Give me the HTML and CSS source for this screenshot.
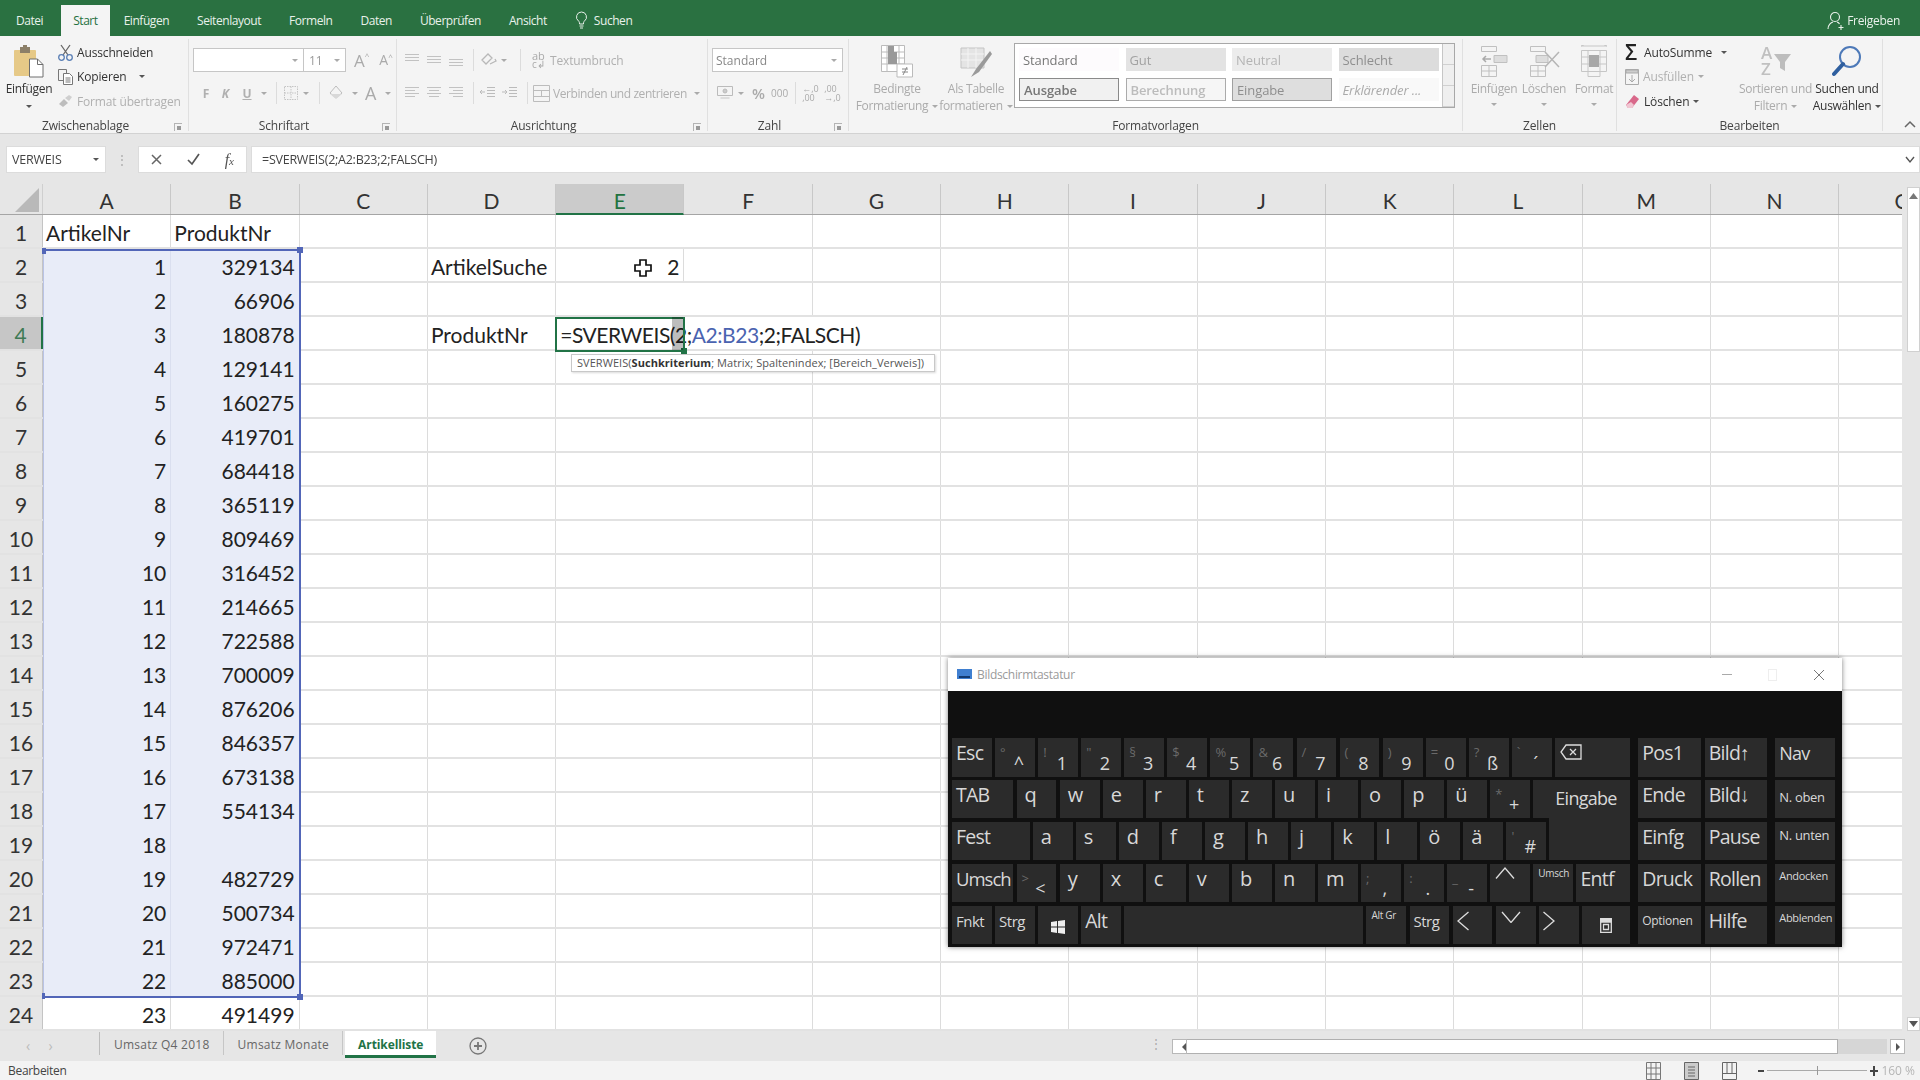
FILE: index.html
```html
<!DOCTYPE html>
<html lang="de">
<head>
<meta charset="utf-8">
<title>Excel</title>
<link rel="stylesheet" href="styles.css">
</head>
<body>
<div class="app">
  <header class="titlebar">
    <nav class="tabs">
      <span class="tab first">Datei</span><span class="tab active">Start</span><span class="tab">Einfügen</span><span class="tab">Seitenlayout</span><span class="tab">Formeln</span><span class="tab">Daten</span><span class="tab">Überprüfen</span><span class="tab">Ansicht</span>
      <span class="search"><svg width="13" height="19" viewBox="0 0 13 19" fill="none" stroke="#e8f0ea" stroke-width="1"><path d="M6.5 1a5 5 0 0 0-3 9c.8.7 1 1.5 1 3h4c0-1.500.2-2.300 1-3a5 5 0 0 0-3-9z"/><path d="M4.500 15h4M5 17h3"/></svg>Suchen</span>
    </nav>
    <span class="share"><svg width="18" height="20" viewBox="0 0 18 20" fill="none" stroke="#e8f0ea" stroke-width="1.100"><circle cx="8" cy="6" r="4.500"/><path d="M1 18c0-4 3-6.500 5-7M10 11c1 .3 2 1 2.500 2M14 14v5M11.500 16.500h5"/></svg>Freigeben</span>
  </header>

  <section class="ribbon">
    <div class="group g-clip">
      <div class="body">
        <div class="big b-paste">
          <svg class="bigicon" width="30" height="33" viewBox="0 0 30 33"><rect x="0" y="5" width="22" height="26" rx="1" fill="#e6c987"/><rect x="6" y="2" width="10" height="6" fill="#8c7f68"/><rect x="9" y="0" width="4" height="4" fill="#8c7f68"/><path d="M15.500 14h8l5.500 5.500V32h-13.500z" fill="#fff" stroke="#6e6e6e"/><path d="M23.500 14v5.500H29" fill="none" stroke="#6e6e6e"/></svg>
          <span class="lbl on">Einfügen</span>
          <i class="caret on"></i>
        </div>
        <div class="stack">
          <div class="sm on"><svg width="15" height="17" viewBox="0 0 15 17" fill="none" stroke-width="1.300"><path d="M3 1l7 10M12 1L5 11" stroke="#666"/><circle cx="3.500" cy="13.500" r="2.800" stroke="#5a7fb5"/><circle cx="11.500" cy="13.500" r="2.800" stroke="#5a7fb5"/></svg><span>Ausschneiden</span></div>
          <div class="sm on"><svg width="15" height="16" viewBox="0 0 15 16" fill="#f4f4f4" stroke="#777"><path d="M.5.500h8v11h-8z"/><path d="M5.500 4.500h6l3 3v8h-9z" fill="#fff"/><path d="M7.500 9h5M7.500 11h5M7.500 13h5"/></svg><span>Kopieren</span><i class="caret on ml"></i></div>
          <div class="sm off"><svg width="15" height="14" viewBox="0 0 15 14"><path d="M1 10l5-5 4 4-5 4z" fill="#bdbdbd"/><path d="M7 4l4-3 3 2-3 4z" fill="#cfcfcf"/></svg><span>Format übertragen</span></div>
        </div>
      </div>
      <div class="glabel">Zwischenablage<i class="launch"></i></div>
    </div>

    <div class="group g-font">
      <div class="body col">
        <div class="rw">
          <div class="combo c-name"><i class="caret"></i></div>
          <div class="combo c-size"><span>11</span><i class="caret"></i></div>
          <span class="aup">A<sup>^</sup></span><span class="adn">A<sup>^</sup></span>
        </div>
        <div class="rw r2 fmt">
          <b class="w18">F</b><b class="w21 it">K</b><b class="w22 un">U</b><i class="caret w12"></i><i class="sep"></i>
          <svg class="w16" width="16" height="16" viewBox="0 0 16 16" fill="none" stroke="#c4c4c4"><path d="M1.500 1.500h13v13h-13zM8 1.500v13M1.500 8h13" stroke-dasharray="1.500 1"/></svg>
          <i class="caret w14"></i><i class="sep"></i>
          <svg class="w22" width="20" height="18" viewBox="0 0 20 18"><path d="M3 9l6-7 6 7-6 5z" fill="none" stroke="#bdbdbd"/><path d="M3 10l12 0-6 5z" fill="#d8d8d8"/></svg>
          <i class="caret w14"></i>
          <span class="bigA">A</span><i class="caret w14"></i>
        </div>
      </div>
      <div class="glabel">Schriftart<i class="launch"></i></div>
    </div>

    <div class="group g-align">
      <div class="body col">
        <div class="rw">
          <svg class="ali" width="16" height="14" viewBox="0 0 16 14" stroke="#c2c2c2"><path d="M1 1.500h14M1 4.500h14M1 7.500h14"/></svg>
          <svg class="ali" width="16" height="14" viewBox="0 0 16 14" stroke="#c2c2c2"><path d="M1 3.500h14M1 6.500h14M1 9.500h14"/></svg>
          <svg class="ali" width="16" height="14" viewBox="0 0 16 14" stroke="#c2c2c2"><path d="M1 6.500h14M1 9.500h14M1 12.500h14"/></svg>
          <i class="sep sep-a"></i>
          <svg class="ori" width="18" height="18" viewBox="0 0 18 18" fill="none" stroke="#b8b8b8" stroke-width="1.300"><path d="M2 9l6-6 4 4-6 6zM10 13l6-3M15 8l1 2-2 1"/></svg>
          <i class="caret w10"></i><i class="sep sep-b"></i>
          <span class="wrapab">ab<small>c↲</small></span>
          <span class="offtxt">Textumbruch</span>
        </div>
        <div class="rw r2">
          <svg class="ali" width="16" height="14" viewBox="0 0 16 14" stroke="#c2c2c2"><path d="M1 1.500h14M1 4.500h10M1 7.500h14M1 10.500h10"/></svg>
          <svg class="ali" width="16" height="14" viewBox="0 0 16 14" stroke="#c2c2c2"><path d="M1 1.500h14M3 4.500h10M1 7.500h14M3 10.500h10"/></svg>
          <svg class="ali" width="16" height="14" viewBox="0 0 16 14" stroke="#c2c2c2"><path d="M1 1.500h14M5 4.500h10M1 7.500h14M5 10.500h10"/></svg>
          <i class="sep sep-a"></i>
          <svg class="ind" width="16" height="14" viewBox="0 0 16 14" fill="none" stroke="#bbb"><path d="M7 1.500h8M7 4.500h8M7 7.500h8M7 10.500h8M5 6H0M2 4L0 6l2 2" /></svg>
          <svg class="ind" width="16" height="14" viewBox="0 0 16 14" fill="none" stroke="#bbb"><path d="M7 1.500h8M7 4.500h8M7 7.500h8M7 10.500h8M0 6h5M3 4l2 2-2 2"/></svg>
          <i class="sep sep-c"></i>
          <svg class="merge" width="17" height="17" viewBox="0 0 17 17" fill="none" stroke="#bcbcbc"><path d="M.5.500h16v16H.5zM.5 5.500h16M.5 11.500h16M8.500 5.500v6"/></svg>
          <span class="offtxt nar">Verbinden und zentrieren</span><i class="caret mlc"></i>
        </div>
      </div>
      <div class="glabel">Ausrichtung<i class="launch"></i></div>
    </div>

    <div class="group g-num">
      <div class="body col">
        <div class="rw"><div class="combo c-std"><span>Standard</span><i class="caret"></i></div></div>
        <div class="rw r2 nums">
          <svg class="w18" width="17" height="16" viewBox="0 0 17 16" fill="none" stroke="#bbb"><path d="M1 1.500h15v9H1z"/><circle cx="8.500" cy="6" r="2" fill="#ccc"/><path d="M4 13h9" stroke="#ddd" stroke-width="2"/></svg>
          <i class="caret w14"></i>
          <span class="pct">%</span><span class="tho">000</span><i class="sep sep-n"></i>
          <span class="dec">←,0<br>,00</span><span class="dec">,00<br>→,0</span>
        </div>
      </div>
      <div class="glabel">Zahl<i class="launch"></i></div>
    </div>

    <div class="group g-style">
      <div class="body gal-body">
        <div class="big b-cond">
          <svg class="bigicon" width="32" height="33" viewBox="0 0 32 33" fill="#fff" stroke="#bbb"><path d="M.5.500h23v26H.5z"/><path d="M6 1v26M18 1v26M1 7h22M1 13h22M1 19h22" fill="none"/><path d="M7 1h6v6h3v12H7z" fill="#999" stroke="none"/><path d="M16 19h15.500v13H16z"/><path d="M21 24h6M21 27h6M26 22l-4 8" fill="none" stroke="#888"/></svg>
          <span class="lbl">Bedingte</span><span class="lbl">Formatierung<i class="caret in"></i></span>
        </div>
        <div class="big b-tab">
          <svg class="bigicon" width="32" height="33" viewBox="0 0 32 33"><path d="M1 3h23v20H1z" fill="#e4e4e4" stroke="#c4c4c4"/><path d="M8 3v20M16 3v20M1 9h23M1 15h23" stroke="#f4f4f4"/><path d="M30 6L16 24l-5 8 8-5L32 9z" fill="#9a9a9a"/></svg>
          <span class="lbl">Als Tabelle</span><span class="lbl">formatieren<i class="caret in"></i></span>
        </div>
        <div class="gallery">
          <div class="sgrid">
            <span class="st s-std">Standard</span><span class="st s-gut">Gut</span><span class="st s-neu">Neutral</span><span class="st s-sch">Schlecht</span>
            <span class="st s-aus">Ausgabe</span><span class="st s-ber">Berechnung</span><span class="st s-ein">Eingabe</span><span class="st s-erk">Erklärender ...</span>
          </div>
          <div class="gscroll"><i></i><i></i><i></i></div>
        </div>
      </div>
      <div class="glabel nolaunch">Formatvorlagen</div>
    </div>

    <div class="group g-cell">
      <div class="body">
        <div class="big b-c"><svg class="bigicon" width="28" height="33" viewBox="0 0 28 33" fill="none" stroke="#c0c0c0"><path d="M1.500 1.500h15v5h-15zM1.500 20.500h15v11h-15zM9 20.500v11M1.500 26h15"/><path d="M14 10.500h13v7H14z" fill="#ddd"/><path d="M3 14h8M6 11l-3 3 3 3" stroke="#aaa" stroke-width="1.500"/></svg><span class="lbl">Einfügen</span><i class="caret"></i></div>
        <div class="big b-c"><svg class="bigicon" width="32" height="33" viewBox="0 0 32 33" fill="none" stroke="#c0c0c0"><path d="M2.500 1.500h15v5h-15zM2.500 20.500h15v11h-15zM10 20.500v11M2.500 26h15"/><path d="M8 10.500h12v7H8z" fill="#ddd"/><path d="M17 7l14 15M31 7L17 22" stroke="#b5b5b5" stroke-width="1.500"/></svg><span class="lbl">Löschen</span><i class="caret"></i></div>
        <div class="big b-c"><svg class="bigicon" width="28" height="33" viewBox="0 0 28 33" fill="none" stroke="#c6c6c6"><path d="M1 1h26M1 1l3-1M27 1l-3-1M1.500 5.500h25v21h-25zM8 5.500v21M20 5.500v21M1.500 12h25M1.500 19h25M8 26.500h12v5H8z"/><path d="M9 10h10v12H9z" fill="#a8a8a8" stroke="none"/></svg><span class="lbl">Format</span><i class="caret"></i></div>
      </div>
      <div class="glabel nolaunch">Zellen</div>
    </div>

    <div class="group g-edit">
      <div class="body">
        <div class="stack st-e">
          <div class="sm on"><span class="sigma">Σ</span><span>AutoSumme</span><i class="caret on ml2"></i></div>
          <div class="sm off"><svg width="14" height="16" viewBox="0 0 14 16" fill="none" stroke="#aaa"><path d="M.5.500h13v15H.5z"/><path d="M1 1h12v3H1z" fill="#ccc"/><path d="M7 6v7M4 10l3 3 3-3"/></svg><span>Ausfüllen</span><i class="caret in"></i></div>
          <div class="sm on"><svg width="15" height="15" viewBox="0 0 15 15"><path d="M9 1l5 4-7 9H3L1 11z" fill="#d9688a"/><path d="M1 11l2 3h4l2-3-3-3z" fill="#f0c6d2"/></svg><span>Löschen</span><i class="caret on in"></i></div>
        </div>
        <div class="big b-sort"><svg class="bigicon" width="32" height="33" viewBox="0 0 32 33"><text x="1" y="14" class="azt">A</text><text x="1" y="30" class="azt">Z</text><path d="M14 9h17l-6 8v9l-5-3v-6z" fill="#bdbdbd"/></svg><span class="lbl">Sortieren und</span><span class="lbl">Filtern<i class="caret in"></i></span></div>
        <div class="big b-find"><svg class="bigicon" width="30" height="33" viewBox="0 0 30 33" fill="none"><circle cx="18" cy="12" r="10" stroke="#4d79b8" stroke-width="2"/><path d="M11 19L2 29" stroke="#2f5f9f" stroke-width="4" stroke-linecap="round"/></svg><span class="lbl on">Suchen und</span><span class="lbl on">Auswählen<i class="caret on in"></i></span></div>
      </div>
      <div class="glabel nolaunch">Bearbeiten</div>
    </div>
    <div class="collapse"><svg width="12" height="8" viewBox="0 0 12 8" fill="none" stroke="#666" stroke-width="1.500"><path d="M1 7l5-5 5 5"/></svg></div>
  </section>

  <section class="fbar">
    <div class="namebox"><span>VERWEIS</span><i class="caret on"></i></div>
    <span class="dots">⋮</span>
    <div class="fxbox">
      <svg width="13" height="13" viewBox="0 0 13 13" fill="none" stroke="#666" stroke-width="1.500"><path d="M2 2l9 9M11 2l-9 9"/></svg>
      <svg width="15" height="13" viewBox="0 0 15 13" fill="none" stroke="#555" stroke-width="1.700"><path d="M2 7l4 4 7-10"/></svg>
      <span class="fx">f<small>x</small></span>
    </div>
    <div class="finput"><span>=SVERWEIS(2;A2:B23;2;FALSCH)</span><svg width="10" height="8" viewBox="0 0 10 8" fill="none" stroke="#555" stroke-width="1.400"><path d="M1 1l4 5 4-5"/></svg></div>
  </section>

  <section class="workspace">
    <div class="sheet">
      <div class="hdr">
        <div class="corner"><i></i></div>
        <div class="ch">A</div><div class="ch">B</div><div class="ch">C</div><div class="ch">D</div><div class="ch sel">E</div><div class="ch">F</div><div class="ch">G</div><div class="ch">H</div><div class="ch">I</div><div class="ch">J</div><div class="ch">K</div><div class="ch">L</div><div class="ch">M</div><div class="ch">N</div><div class="ch">O</div>
      </div>
      <div class="row"><div class="rh">1</div><div class="c t">ArtikelNr</div><div class="c t">ProduktNr</div></div>
      <div class="row"><div class="rh">2</div><div class="c n s">1</div><div class="c n s">329134</div><div class="c"></div><div class="c t lab">ArtikelSuche</div><div class="c n">2</div></div>
      <div class="row"><div class="rh">3</div><div class="c n s">2</div><div class="c n s">66906</div></div>
      <div class="row"><div class="rh sel">4</div><div class="c n s">3</div><div class="c n s">180878</div><div class="c"></div><div class="c t lab">ProduktNr</div><div class="c t edit"><i class="argmark"></i><span class="ftext">=SVERWEIS(2;<em>A2:B23</em>;2;FALSCH)</span></div></div>
      <div class="row"><div class="rh">5</div><div class="c n s">4</div><div class="c n s">129141</div></div>
      <div class="row"><div class="rh">6</div><div class="c n s">5</div><div class="c n s">160275</div></div>
      <div class="row"><div class="rh">7</div><div class="c n s">6</div><div class="c n s">419701</div></div>
      <div class="row"><div class="rh">8</div><div class="c n s">7</div><div class="c n s">684418</div></div>
      <div class="row"><div class="rh">9</div><div class="c n s">8</div><div class="c n s">365119</div></div>
      <div class="row"><div class="rh">10</div><div class="c n s">9</div><div class="c n s">809469</div></div>
      <div class="row"><div class="rh">11</div><div class="c n s">10</div><div class="c n s">316452</div></div>
      <div class="row"><div class="rh">12</div><div class="c n s">11</div><div class="c n s">214665</div></div>
      <div class="row"><div class="rh">13</div><div class="c n s">12</div><div class="c n s">722588</div></div>
      <div class="row"><div class="rh">14</div><div class="c n s">13</div><div class="c n s">700009</div></div>
      <div class="row"><div class="rh">15</div><div class="c n s">14</div><div class="c n s">876206</div></div>
      <div class="row"><div class="rh">16</div><div class="c n s">15</div><div class="c n s">846357</div></div>
      <div class="row"><div class="rh">17</div><div class="c n s">16</div><div class="c n s">673138</div></div>
      <div class="row"><div class="rh">18</div><div class="c n s">17</div><div class="c n s">554134</div></div>
      <div class="row"><div class="rh">19</div><div class="c n s">18</div><div class="c n s"></div></div>
      <div class="row"><div class="rh">20</div><div class="c n s">19</div><div class="c n s">482729</div></div>
      <div class="row"><div class="rh">21</div><div class="c n s">20</div><div class="c n s">500734</div></div>
      <div class="row"><div class="rh">22</div><div class="c n s">21</div><div class="c n s">972471</div></div>
      <div class="row"><div class="rh">23</div><div class="c n s">22</div><div class="c n s">885000</div></div>
      <div class="row"><div class="rh">24</div><div class="c n">23</div><div class="c n">491499</div></div>

      <div class="selbox"><i class="h tl"></i><i class="h tr"></i><i class="h bl"></i><i class="h br"></i></div>
      <div class="editbox"><i class="ghandle"></i></div>
      <div class="tip">SVERWEIS(<b>Suchkriterium</b>; Matrix; Spaltenindex; [Bereich_Verweis])</div>
      <svg class="pointer" width="18" height="18" viewBox="0 0 18 18"><path d="M6 1h6v5h5v6h-5v5H6v-5H1V6h5z" fill="#fff" stroke="#111" stroke-width="1.700"/></svg>
    </div>
    <div class="vscroll">
      <div class="vbtn thumb"><svg width="9" height="6" viewBox="0 0 9 6"><path d="M4.500 0l4.500 6H0z" fill="#777"/></svg></div>
      <div class="vbtn down"><svg width="9" height="6" viewBox="0 0 9 6"><path d="M0 0h9L4.500 6z" fill="#555"/></svg></div>
    </div>
  </section>

  <section class="tabbar">
    <div class="nav"><span>‹</span><span>›</span></div>
    <span class="stab">Umsatz Q4 2018</span><span class="stab">Umsatz Monate</span><span class="stab on">Artikelliste</span>
    <svg class="plus" width="20" height="20" viewBox="0 0 20 20" fill="none" stroke="#777" stroke-width="1.300"><circle cx="10" cy="10" r="8"/><path d="M10 6v8M6 10h8" stroke-width="1.800"/></svg>
    <span class="tdots">⋮</span>
    <div class="hscroll">
      <div class="hb"><i class="tri l"></i></div>
      <div class="hthumb"></div>
      <div class="htrack"></div>
      <div class="hb"><i class="tri r"></i></div>
    </div>
  </section>

  <footer class="status">
    <span>Bearbeiten</span>
    <div class="views">
      <svg width="16" height="20" viewBox="0 0 16 20" fill="none" stroke="#777"><path d="M.5 1.500h14v17H.5zM5 1.500v17M10 1.500v17M.5 7h14M.5 13h14"/></svg>
      <svg width="16" height="20" viewBox="0 0 16 20" fill="#ccc" stroke="#666"><path d="M.5 1.500h14v17H.5z"/><path d="M4 6h7M4 9h7M4 12h7M4 15h7" fill="none"/></svg>
      <svg width="16" height="20" viewBox="0 0 16 20" fill="none" stroke="#666"><path d="M.5 1.500h14v17H.5zM5 1.500v11M10 1.500v11M.5 12.500h14"/></svg>
    </div>
    <div class="zoom"><i class="minus"></i><div class="slider"><i></i></div><svg width="8" height="12" viewBox="0 0 8 12" stroke="#444" stroke-width="2"><path d="M4 1v10M0 6h8"/></svg></div>
    <span class="pctz">160 %</span>
  </footer>

  <aside class="osk">
    <div class="osk-title">
      <svg width="15" height="12" viewBox="0 0 15 12"><rect width="15" height="10" fill="#3f7fd0"/><path d="M2 7h11v2H2z" fill="#123a70"/></svg>
      <span class="osk-name">Bildschirmtastatur</span>
      <div class="osk-ctrl"><i class="m"></i><i class="x"></i><svg width="12" height="12" viewBox="0 0 12 12" stroke="#777" stroke-width="1"><path d="M1 1l10 10M11 1L1 11"/></svg></div>
    </div>
    <div class="osk-body">
      <div class="k-main">
        <span class="k s8 tl">Esc</span><span class="k s8 d"><u>°</u><b>^</b></span><span class="k s8 d"><u>!</u><b>1</b></span><span class="k s8 d"><u>"</u><b>2</b></span><span class="k s8 d"><u>§</u><b>3</b></span><span class="k s8 d"><u>$</u><b>4</b></span><span class="k s8 d"><u>%</u><b>5</b></span><span class="k s8 d"><u>&amp;</u><b>6</b></span><span class="k s8 d"><u>/</u><b>7</b></span><span class="k s8 d"><u>(</u><b>8</b></span><span class="k s8 d"><u>)</u><b>9</b></span><span class="k s8 d"><u>=</u><b>0</b></span><span class="k s8 d"><u>?</u><b>ß</b></span><span class="k s8 d"><u>`</u><b>´</b></span><span class="k s14 bsp"><svg width="22" height="16" viewBox="0 0 22 16" fill="none" stroke="#ddd" stroke-width="1.300"><path d="M6 1h15v14H6L1 8zM10 5l6 6M16 5l-6 6"/></svg></span>

        <span class="k s12 tl">TAB</span><span class="k s8 l">q</span><span class="k s8 l">w</span><span class="k s8 l">e</span><span class="k s8 l">r</span><span class="k s8 l">t</span><span class="k s8 l">z</span><span class="k s8 l">u</span><span class="k s8 l">i</span><span class="k s8 l">o</span><span class="k s8 l">p</span><span class="k s8 l">ü</span><span class="k s8 d"><u>*</u><b>+</b></span><span class="k s18 ent">Eingabe</span>

        <span class="k s15 tl">Fest</span><span class="k s8 l">a</span><span class="k s8 l">s</span><span class="k s8 l">d</span><span class="k s8 l">f</span><span class="k s8 l">g</span><span class="k s8 l">h</span><span class="k s8 l">j</span><span class="k s8 l">k</span><span class="k s8 l">l</span><span class="k s8 l">ö</span><span class="k s8 l">ä</span><span class="k s8 d"><u>'</u><b>#</b></span><span class="k s15b"></span>

        <span class="k s12 tl um">Umsch</span><span class="k s8 d"><u>&gt;</u><b>&lt;</b></span><span class="k s8 l">y</span><span class="k s8 l">x</span><span class="k s8 l">c</span><span class="k s8 l">v</span><span class="k s8 l">b</span><span class="k s8 l">n</span><span class="k s8 l">m</span><span class="k s8 d"><u>;</u><b>,</b></span><span class="k s8 d"><u>:</u><b>.</b></span><span class="k s8 d"><u>_</u><b>-</b></span><span class="k s8 arw up"><svg width="20" height="12" viewBox="0 0 20 12" fill="none" stroke="#ddd" stroke-width="1.300"><path d="M1 11.500L10 1l9 10.500"/></svg></span><span class="k s8 tiny">Umsch</span><span class="k s10 tl">Entf</span>

        <span class="k s8 tl sm1">Fnkt</span><span class="k s8 tl sm1">Strg</span><span class="k s8 win"><svg width="14" height="14" viewBox="0 0 14 14" fill="#eee"><path d="M0 2l6-1v5.500H0zM7 1l7-1v6.500H7zM0 7.500h6V13l-6-1zM7 7.500h7V14l-7-1z"/></svg></span><span class="k s8 tl">Alt</span><span class="k s45"></span><span class="k s8 tiny">Alt Gr</span><span class="k s8 tl sm1">Strg</span><span class="k s8 arw side"><svg width="12" height="20" viewBox="0 0 12 20" fill="none" stroke="#ddd" stroke-width="1.300"><path d="M11.500 1L1 10l10.500 9"/></svg></span><span class="k s8 arw dn"><svg width="20" height="12" viewBox="0 0 20 12" fill="none" stroke="#ddd" stroke-width="1.300"><path d="M1 1l9 10.500L19 1"/></svg></span><span class="k s8 arw side"><svg width="12" height="20" viewBox="0 0 12 20" fill="none" stroke="#ddd" stroke-width="1.300"><path d="M.5 1L11 10 .5 19"/></svg></span><span class="k s9 menu"><svg width="12" height="15" viewBox="0 0 12 15" fill="none" stroke="#ddd" stroke-width="1.300"><path d="M.7.700h10.600v13.600H.7z"/><path d="M1 1h10v3H1z" fill="#ddd"/><path d="M3.500 6.500h5v5h-5z"/></svg></span>
      </div>
      <div class="k-side">
        <span class="k tl">Pos1</span><span class="k tl">Bild↑</span><span class="k tl sm2">Nav</span>
        <span class="k tl">Ende</span><span class="k tl">Bild↓</span><span class="k tl sm3">N. oben</span>
        <span class="k tl">Einfg</span><span class="k tl">Pause</span><span class="k tl sm3 up">N. unten</span>
        <span class="k tl">Druck</span><span class="k tl">Rollen</span><span class="k tl sm4">Andocken</span>
        <span class="k tl sm5">Optionen</span><span class="k tl">Hilfe</span><span class="k tl sm4">Abblenden</span>
      </div>
    </div>
  </aside>
</div>
</body>
</html>
```

FILE: styles.css
```css
* { box-sizing: border-box; }
html, body { margin: 0; padding: 0; height: 100%; overflow: hidden; background: #e6e6e6; }
body { font-family: "Open Sans", "Liberation Sans", sans-serif; font-size: 12px; color: #444; }
i { font-style: normal; display: block; }
svg { display: block; flex: none; }

.app { position: relative; width: 1920px; height: 1080px; display: flex; flex-direction: column; overflow: hidden; filter: blur(0.55px); }

/* title bar */
.titlebar { height: 36px; background: #2a7141; color: #e9f1eb; display: flex; align-items: flex-end; justify-content: space-between; flex: none; }
.tabs { display: flex; align-items: flex-end; padding-left: 2px; }
.tab { height: 31px; padding: 7px 14px 0; white-space: nowrap; letter-spacing: -.45px; }
.tab.first { padding-left: 14px; padding-right: 18px; }
.tab.active { background: #f4f4f4; color: #26703f; padding: 7px 12px 0; margin: 0; }
.search { height: 31px; display: flex; align-items: center; gap: 6px; margin-left: 14px; letter-spacing: -.45px; }
.share { height: 31px; display: flex; align-items: center; gap: 2px; padding-right: 20px; letter-spacing: -.3px; }

/* ribbon */
.ribbon { height: 98px; flex: none; background: #f4f4f4; display: flex; border-bottom: 1px solid #d2d2d2; position: relative; }
.group { display: flex; flex-direction: column; border-right: 1px solid #e0e0e0; margin: 3px 0 2px; flex: none; }
.body { flex: 1; display: flex; min-height: 0; }
.body.col { flex-direction: column; padding-top: 9px; }
.glabel { height: 18px; text-align: center; line-height: 18px; color: #444; position: relative; white-space: nowrap; letter-spacing: -.15px; margin-bottom: -4px; padding-right: 17px; }
.glabel.nolaunch { padding-right: 0; }
.launch { position: absolute; right: 6px; top: 6px; width: 8px; height: 8px; border: 1px solid #b4b4b4; border-width: 1px 0 0 1px; }
.launch::after { content: ""; display: block; width: 4px; height: 4px; margin: 2px; background: #999; }

.g-clip { width: 189px; }
.g-font { width: 208px; }
.g-align { width: 311px; }
.g-num { width: 141px; }
.g-style { width: 614px; }
.g-cell { width: 154px; }
.g-edit { width: 266px; }
.collapse { position: absolute; right: 4px; bottom: 5px; }

.caret { width: 0; height: 0; border: 3px solid transparent; border-top: 3px solid #aaa; border-bottom: 0; }
.caret.on { border-top-color: #555; }
.caret.in { display: inline-block; margin-left: 4px; vertical-align: middle; }
.sm .caret.in { margin-left: 0; }
.caret.ml { margin-left: 9px; }
.caret.ml2 { margin-left: 5px; }
.caret.mlc { margin-left: 7px; }
.w10 { margin: 0 3px; }
i.caret.w12 { margin: 0 3px; }
i.caret.w14 { margin: 0 4px; }
.w18 { width: 18px; text-align: center; }
.w21 { width: 21px; text-align: center; }
.w22 { width: 22px; text-align: center; }
.w16 { width: 16px; }

.big { display: flex; flex-direction: column; align-items: center; padding-top: 6px; flex: none; }
.bigicon { margin-bottom: 2px; }
.lbl { color: #ababab; line-height: 17px; white-space: nowrap; letter-spacing: -.3px; }
.lbl.on { color: #333; }
.big > .caret { margin-top: 6px; }
.b-paste { width: 58px; }
.b-paste > .caret { margin-top: 8px; }
.stack { display: flex; flex-direction: column; padding-top: 1px; }
.sm { height: 24.500px; display: flex; align-items: center; gap: 4px; white-space: nowrap; letter-spacing: -.15px; }
.sm.on { color: #333; }
.sm.off { color: #b0b0b0; }

.rw { display: flex; align-items: center; height: 24px; flex: none; }
.r2 { margin-top: 9px; }
.combo { height: 24px; background: #fff; border: 1px solid #c6c6c6; display: flex; align-items: center; justify-content: space-between; padding: 0 5px; color: #9a9a9a; }
.g-font .body { padding-left: 4px; }
.c-name { width: 111px; justify-content: flex-end; }
.c-size { width: 43px; margin-left: -1px; }
.aup, .adn { color: #aaa; display: flex; }
.aup { font-size: 17px; margin-left: 8px; line-height: 1; }
.adn { font-size: 14px; margin-left: 10px; line-height: 1; }
.aup sup, .adn sup { font-size: 8px; line-height: 1; }
.fmt { padding-left: 4px; color: #b0b0b0; }
.fmt b { font-weight: 700; }
.it { font-style: italic; }
.un { text-decoration: underline; }
.sep { width: 1px; height: 22px; background: #dcdcdc; margin: 0 6px; flex: none; }
.bigA { font-size: 18px; margin-left: 3px; color: #aaa; width: 16px; }

.g-align .body { padding-left: 7px; }
.ali { margin-right: 6px; }
.sep-a { margin: 0 6px 0 3px; }
.sep-b { margin: 0 7px 0 10px; }
.sep-c { margin: 0 5px 0 3px; }
.ind { margin-right: 6px; }
.merge { margin-right: 3px; }
.wrapab { color: #aaa; font-size: 11px; line-height: 9px; width: 18px; margin-left: 4px; }
.wrapab small { display: block; font-size: 10px; }
.offtxt { color: #b0b0b0; white-space: nowrap; letter-spacing: -.15px; }
.offtxt.nar { letter-spacing: -.42px; }

.g-num .body { padding-left: 4px; }
.c-std { width: 131px; color: #888; padding-left: 3px; }
.nums { padding-left: 4px; color: #aaa; }
.pct { font-size: 15px; font-weight: 600; margin-left: 4px; }
.tho { font-size: 10px; margin-left: 6px; }
.sep-n { margin: 0 6px 0 7px; }
.dec { font-size: 9px; line-height: 9px; width: 22px; }

.gal-body { padding-left: 0; }
.b-cond { width: 96px; }
.b-tab { width: 62px; padding-top: 6px; }
.gallery { display: flex; height: 65px; margin: 4px 0 0 7px; background: #fff; border: 1px solid #a8a8a8; width: 441px; }
.sgrid { width: 428px; padding: 4px 4px; display: grid; grid-template-columns: repeat(4, 100px); column-gap: 6.500px; grid-template-rows: 23px 23px; row-gap: 7px; border-right: 1px solid #c6c6c6; }
.st { display: flex; align-items: center; padding-left: 4px; white-space: nowrap; font-size: 13px; letter-spacing: -.1px; }
.s-std { color: #777; background: #fdfbfd; }
.s-gut { color: #a2a2a2; background: #e3e3e3; }
.s-neu { color: #b4b4b4; background: #ececec; }
.s-sch { color: #8f8f8f; background: #dcdcdc; }
.s-aus { color: #777; font-weight: 600; background: #f1f1f1; border: 1px solid #8a8a8a; }
.s-ber { color: #bcbcbc; font-weight: 600; background: #f6f6f6; border: 1px solid #ababab; }
.s-ein { color: #8e8e8e; background: #dedede; border: 1px solid #a0a0a0; }
.s-erk { color: #aaa; font-style: italic; background: #f9f9f9; }
.gscroll { flex: 1; display: flex; flex-direction: column; background: #efefef; }
.gscroll i { flex: 1; border-bottom: 1px solid #d0d0d0; }

.g-cell .body { padding-left: 8px; }
.b-c { width: 46px; }
.b-c + .b-c { margin-left: 4px; }
.g-edit .body { padding-left: 8px; }
.st-e { width: 113px; }
.sigma { font-size: 21px; line-height: 1; color: #222; font-weight: 600; width: 15px; }
.b-sort { width: 75px; }
.azt { font-size: 17px; fill: #c0c0c0; font-weight: 600; font-family: "Open Sans", sans-serif; }
.b-find { width: 68px; }

/* formula bar */
.fbar { height: 27px; margin: 12px 0 11px; display: flex; flex: none; padding: 0 0 0 6px; align-items: stretch; }
.namebox { width: 100px; background: #fff; border: 1px solid #dcdcdc; display: flex; align-items: center; justify-content: space-between; padding: 0 6px 0 5px; color: #444; font-size: 12.500px; letter-spacing: -.2px; }
.dots { width: 32px; text-align: center; color: #aaa; line-height: 27px; }
.fxbox { width: 109px; background: #fff; border: 1px solid #dcdcdc; display: flex; align-items: center; justify-content: space-between; padding: 0 12px 0 11px; }
.fx { font-family: "Liberation Serif", serif; font-style: italic; font-size: 16px; color: #555; }
.fx small { font-size: 11px; }
.finput { flex: 1; margin-left: 4px; background: #fff; border: 1px solid #dcdcdc; display: flex; align-items: center; justify-content: space-between; padding: 0 4px 0 10px; font-size: 12.500px; letter-spacing: -.25px; color: #444; }

/* sheet */
.workspace { height: 847px; flex: none; display: flex; }
.sheet { width: 1902px; position: relative; overflow: hidden; font-family: Lato, "Liberation Sans", sans-serif; font-size: 21px; color: #222; background: #fff; }
.hdr { height: 31px; display: flex; background: #e6e6e6; border-bottom: 1px solid #a5a5a5; }
.corner { width: 43px; flex: none; position: relative; border-right: 1px solid #cfcfcf; }
.corner i { position: absolute; right: 3px; bottom: 2px; width: 24px; height: 24px; background: #b9b9b9; clip-path: polygon(100% 0, 100% 100%, 0 100%); }
.ch { width: 128.300px; flex: none; text-align: center; line-height: 33px; color: #333; border-right: 1px solid #c8c8c8; }
.ch.sel { background: #cbcbcb; color: #22733f; border-bottom: 2px solid #217346; height: 31px; }
.row { height: 34px; display: flex; border-bottom: 2px solid #e2e2e2; background-image: repeating-linear-gradient(90deg, #fff 0 127.300px, #dcdcdc 127.300px 128.300px); background-position: 43px 0; }
.rh { width: 43px; flex: none; text-align: center; background: #e6e6e6; border-right: 1px solid #c4c4c4; line-height: 36px; color: #333; }
.rh.sel { background: #c6c6c6; color: #3f7a55; border-right: 2px solid #217346; }
.c { width: 128.300px; flex: none; line-height: 35px; padding: 0 4px 0 3px; white-space: nowrap; border-right: 1px solid #dcdcdc; }
.c.n { text-align: right; }
.c.s { background: #e8ecf8; border-right-color: #dadfef; margin-bottom: -2px; height: 34px; }
.edit { position: relative; padding-left: 4px; overflow: visible; border-right: 0; }
.ftext { position: relative; background: #fff; display: inline-block; padding-right: 6px; letter-spacing: -.45px; height: 32px; }
.ftext em { font-style: normal; color: #4a63b0; }
.argmark { position: absolute; right: 1px; top: 0; width: 11px; height: 33px; background: #bdbdbd; z-index: 2; mix-blend-mode: multiply; }

.selbox { position: absolute; left: 43px; top: 65px; width: 258px; height: 749px; border: 2px solid #5266b8; border-left: 1px solid #b9c3e6; pointer-events: none; }
.h { position: absolute; width: 6px; height: 6px; background: #5266b8; }
.h.tl { left: -2px; top: -3px; width: 3px; }
.h.tr { right: -4px; top: -4px; }
.h.bl { left: -2px; bottom: -3px; width: 3px; }
.h.br { right: -4px; bottom: -4px; }
.editbox { position: absolute; left: 555px; top: 133px; width: 130px; height: 35px; border: 2px solid #217346; pointer-events: none; }
.ghandle { position: absolute; right: -4px; bottom: -4px; width: 6px; height: 6px; background: #217346; }
.tip { position: absolute; left: 571px; top: 170px; width: 364px; height: 18px; background: #fff; border: 1px solid #c8c8c8; box-shadow: 1px 1px 2px rgba(0,0,0,.15); font-family: "Open Sans", sans-serif; font-size: 11px; line-height: 16px; padding: 0 5px; color: #555; white-space: nowrap; letter-spacing: .05px; }
.tip b { font-weight: 700; color: #333; }
.pointer { position: absolute; left: 634px; top: 75px; }

.vscroll { flex: 1; display: flex; flex-direction: column; padding: 3px 0 0 5px; }
.vbtn { background: #fff; border: 1px solid #d0d0d0; display: flex; justify-content: center; }
.thumb { height: 165px; padding-top: 5px; }
.down { height: 14px; margin-top: auto; align-items: center; }

/* tabs */
.tabbar { height: 30px; flex: none; display: flex; align-items: stretch; background: #e6e6e6; position: relative; color: #666; letter-spacing: .25px; }
.nav { width: 100px; display: flex; gap: 18px; padding: 4px 0 0 26px; color: #bbb; font-size: 14px; border-right: 1px solid #bcbcbc; margin: 1px 0 6px; flex: none; }
.stab { padding: 5px 13px 0 14px; border-right: 1px solid #c6c6c6; margin-bottom: 6px; white-space: nowrap; }
.stab.on { background: #fff; color: #217346; font-weight: 700; border: 0; border-bottom: 3px solid #217346; margin: 0 0 3px 2px; padding: 5px 13px 0; letter-spacing: -.1px; }
.plus { margin: 5px 0 0 32px; }
.tdots { position: absolute; left: 1150px; top: 4px; color: #aaa; }
.hscroll { position: absolute; left: 1172px; top: 8px; width: 733px; height: 15px; display: flex; }
.hb { width: 15px; background: #fff; border: 1px solid #b8b8b8; display: flex; align-items: center; justify-content: center; flex: none; }
.hthumb { width: 651px; background: #fff; border: 1px solid #b0b0b0; border-left: 0; flex: none; }
.htrack { flex: 1; background: #d6d6d6; margin-right: 3px; }
.tri { width: 0; height: 0; border: 4px solid transparent; }
.tri.l { border-right-color: #555; border-left: 0; }
.tri.r { border-left-color: #555; border-right: 0; }

/* status */
.status { height: 19px; flex: none; background: #f3f3f3; display: flex; align-items: center; padding-left: 8px; position: relative; letter-spacing: -.3px; color: #444; }
.views { margin-left: auto; display: flex; gap: 22px; align-items: center; }
.zoom { display: flex; align-items: center; margin-left: 20px; }
.minus { width: 6px; height: 2px; background: #444; }
.slider { width: 100px; height: 1px; background: #aaa; margin: 0 3px; position: relative; }
.slider i { position: absolute; left: 50px; top: -4px; width: 1px; height: 9px; background: #999; }
.pctz { margin: 0 5px 0 3px; color: #b5b5b5; letter-spacing: 0; }

/* on-screen keyboard */
.osk { position: absolute; left: 948px; top: 658px; width: 894px; height: 289px; background: #101010; box-shadow: 0 0 5px rgba(0,0,0,.5); display: flex; flex-direction: column; }
.osk-title { height: 33px; flex: none; background: #fff; display: flex; align-items: center; padding: 0 0 0 9px; color: #9a9a9a; }
.osk-name { margin-left: 5px; letter-spacing: -.3px; }
.osk-ctrl { margin-left: auto; display: flex; align-items: center; gap: 36px; padding-right: 17px; }
.osk-ctrl .m { width: 10px; height: 1px; background: #aaa; }
.osk-ctrl .x { width: 9px; height: 12px; border: 1px solid #eee; }
.osk-body { flex: 1; padding: 47px 0 0 4px; display: flex; gap: 8px; font-family: "Open Sans", sans-serif; color: #d8d8d8; }
.k-main { width: 679px; height: 206px; display: grid; grid-template-columns: repeat(126, 1fr); grid-template-rows: repeat(5, 38.500px); row-gap: 3.400px; }
.k-side { width: 204px; height: 206px; display: grid; grid-template-columns: 62.500px 62.500px 64px; column-gap: 4px; grid-template-rows: repeat(5, 38.500px); row-gap: 3.400px; }
.k-side .k:nth-child(3n) { margin-left: 4px; }
.k-side .k { margin-right: 0; }
.k { background: #2b2b2b; margin-right: 3.200px; min-width: 0; font-size: 19.500px; line-height: 30px; overflow: hidden; white-space: nowrap; letter-spacing: -.75px; display: block; position: relative; }
.s8 { grid-column: span 8; }
.s9 { grid-column: span 9; margin-right: 0; }
.s10 { grid-column: span 10; margin-right: 0; }
.s12 { grid-column: span 12; }
.s14 { grid-column: span 14; margin-right: 0; }
.s15 { grid-column: span 15; }
.s15b { grid-column: span 15; margin: -4px 0 0 0; }
.s18 { grid-column: span 18; margin-right: 0; }
.s45 { grid-column: span 45; }
.tl { padding: 0 0 0 4px; }
.um { font-size: 18.500px; letter-spacing: -1px; }
.l { padding-left: 8px; font-size: 20px; line-height: 30px; }
.d u { position: absolute; left: 5px; top: 6px; font-size: 13px; line-height: 16px; text-decoration: none; color: #6a6a6a; }
.d b { position: absolute; left: 0; right: 0; bottom: 1px; text-align: center; font-weight: 400; font-size: 18px; line-height: 26px; padding-left: 7px; }
.bsp { padding: 6px 0 0 5px; }
.ent { padding-left: 22px; font-size: 18px; line-height: 36px; }
.arw { display: flex; }
.arw.up { padding: 3px 0 0 5px; }
.arw.dn { padding: 5px 0 0 5px; }
.arw.side { padding: 5px 0 0 4px; }
.tiny { font-size: 10px; line-height: 18px; padding-left: 5px; letter-spacing: -.3px; }
.sm1 { font-size: 15px; line-height: 30px; letter-spacing: -.5px; }
.win { display: flex; justify-content: center; padding-top: 14px; }
.menu { display: flex; justify-content: center; padding-top: 12px; }
.sm2 { font-size: 18px; }
.sm3 { font-size: 13px; line-height: 34px; letter-spacing: -.3px; }
.sm3.up { line-height: 26px; }
.sm4 { font-size: 11px; line-height: 24px; letter-spacing: -.3px; }
.sm5 { font-size: 12px; line-height: 30px; letter-spacing: -.3px; }
```
